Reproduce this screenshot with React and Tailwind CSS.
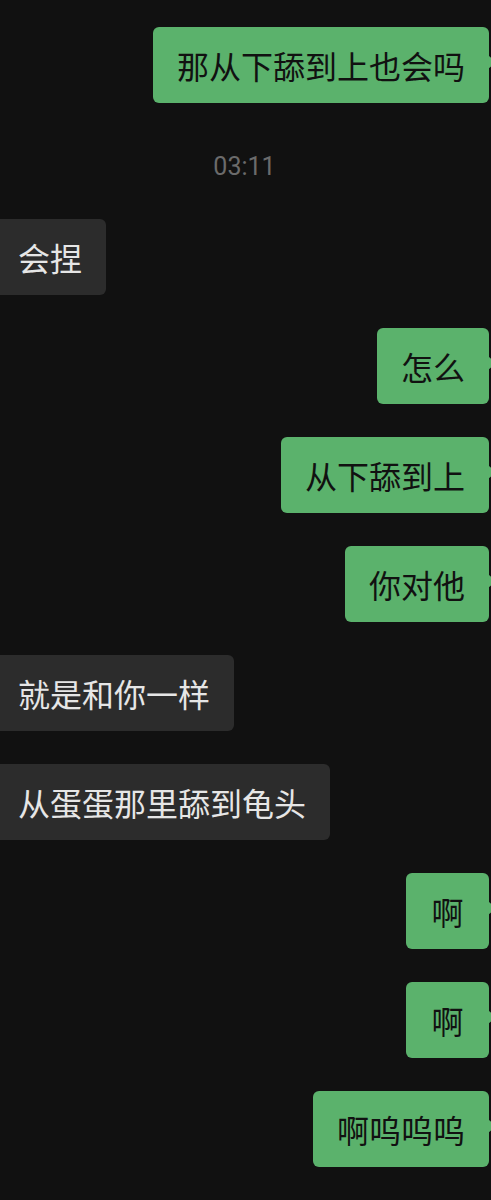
import React from "react";

const FONT = { fontFamily: '"Noto Sans CJK SC", "Noto Sans", sans-serif' };

function Right({ text }) {
  return (
    <div className="flex justify-end pr-[2px]">
      <div className="relative">
        <div className="h-[76px] flex items-center px-6 rounded-[6px] bg-[#5bb26c] text-[#111111] text-[32px] leading-none min-w-[83px] justify-center">
          {text}
        </div>
        <div className="absolute right-[-7px] top-[28px] w-0 h-0 border-y-[7px] border-y-transparent border-l-[8px] border-l-[#5bb26c]" />
      </div>
    </div>
  );
}

function Left({ text }) {
  return (
    <div className="flex justify-start ml-[-6px]">
      <div className="h-[76px] flex items-center px-6 rounded-[6px] bg-[#2c2c2c] text-[#e6e6e6] text-[32px] leading-none">
        {text}
      </div>
    </div>
  );
}

export default function App() {
  return (
    <div className="w-[491px] h-[1200px] bg-[#111111] overflow-hidden" style={FONT}>
      <div className="pt-[27px] flex flex-col">
        <Right text="那从下舔到上也会吗" />
        <div
          className="mt-[48px] mb-[36px] h-[32px] leading-[32px] text-center text-[25px] text-[#6b6b6b] pr-[2px]"
          style={{ fontFamily: '"Helvetica Neue", Roboto, "Liberation Sans", sans-serif' }}
        >
          03:11
        </div>
        <div className="flex flex-col gap-[33px]">
          <Left text="会捏" />
          <Right text="怎么" />
          <Right text="从下舔到上" />
          <Right text="你对他" />
          <Left text="就是和你一样" />
          <Left text="从蛋蛋那里舔到龟头" />
          <Right text="啊" />
          <Right text="啊" />
          <Right text="啊呜呜呜" />
        </div>
      </div>
    </div>
  );
}
